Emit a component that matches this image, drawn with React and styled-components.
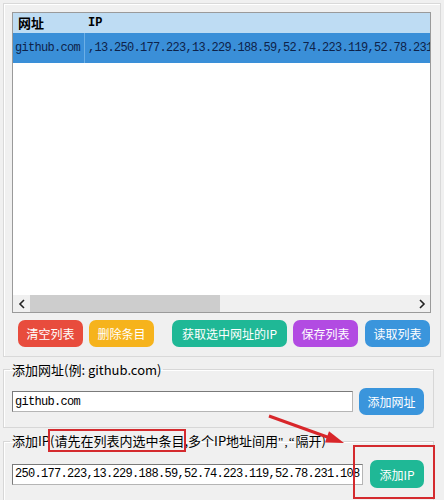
import React from 'react';
import styled, { createGlobalStyle } from 'styled-components';

const GlobalStyle = createGlobalStyle`
  body {
    margin: 0;
    background: #f0f0f0;
    font-family: "Noto Sans CJK SC", "Liberation Sans", sans-serif;
    font-size: 13px;
    color: #000;
  }
`;

const rows = [
  {
    site: 'github.com',
    ip: ',13.250.177.223,13.229.188.59,52.74.223.119,52.78.231.108',
  },
];

const buttons = [
  { text: '清空列表', color: '#e84c3d', width: 65 },
  { text: '删除条目', color: '#f6b31c', width: 65 },
  { text: '获取选中网址的IP', color: '#1fb896', width: 115, gap: 18 },
  { text: '保存列表', color: '#b24be2', width: 65 },
  { text: '读取列表', color: '#3a95dc', width: 65, gap: 7 },
];

const Chevron = ({ left }) => (
  <svg width="8" height="10" viewBox="0 0 8 10">
    <path
      d={left ? 'M6 1 L2 5 L6 9' : 'M2 1 L6 5 L2 9'}
      fill="none"
      stroke="#222"
      strokeWidth="1.6"
    />
  </svg>
);

const App = () => {
  return (
    <Window>
      <GlobalStyle />
      <ListPanel>
        <Table>
          <HeaderRow>
            <HeadCell>网址</HeadCell>
            <HeadCell mono>IP</HeadCell>
          </HeaderRow>
          {rows.map((r, i) => (
            <DataRow key={i}>
              <Cell>{r.site}</Cell>
              <Cell divider>{r.ip}</Cell>
            </DataRow>
          ))}
          <Filler />
          <ScrollBar>
            <ScrollArrow>
              <Chevron left />
            </ScrollArrow>
            <Thumb />
            <Track />
            <ScrollArrow>
              <Chevron />
            </ScrollArrow>
          </ScrollBar>
        </Table>
        <ButtonRow>
          {buttons.map((b) => (
            <ColorButton
              key={b.text}
              $color={b.color}
              $width={b.width}
              $gap={b.gap || 6}
            >
              {b.text}
            </ColorButton>
          ))}
        </ButtonRow>
      </ListPanel>

      <Group $width={431}>
        <Legend>添加网址(例: github.com)</Legend>
        <FormRow>
          <TextBox $width={341} defaultValue="github.com" />
          <ColorButton $color="#3a95dc" $width={65} $gap={6}>
            添加网址
          </ColorButton>
        </FormRow>
      </Group>

      <Group $width={431}>
        <Legend>
          添加IP<Marked>(请先在列表内选中条目</Marked>,多个IP地址间用<Quote>",“</Quote>隔开)
        </Legend>
        <FormRow>
          <TextBox
            $width={351}
            defaultValue="250.177.223,13.229.188.59,52.74.223.119,52.78.231.108"
          />
          <ColorButton $color="#1fb896" $width={54} $gap={7} $tall>
            添加IP
          </ColorButton>
        </FormRow>
      </Group>

      <Arrow width="100" height="50" viewBox="0 0 100 50">
        <line x1="9" y1="11" x2="70" y2="33" stroke="#d8262a" strokeWidth="3" />
        <polygon points="84,38 65,37.5 69,26.3" fill="#d8262a" />
      </Arrow>
      <Highlight />
    </Window>
  );
};

const Window = styled.div`
  position: relative;
  width: 444px;
  height: 500px;
  padding: 3px;
  box-sizing: border-box;
  overflow: hidden;
`;

const ListPanel = styled.div`
  height: 354px;
  box-sizing: border-box;
  padding: 8px 9px 9px 8px;
  border: 1px solid #d9d9d9;
  box-shadow: inset 1px 1px 0 #fff;
  display: flex;
  flex-direction: column;
  gap: 7px;
`;

const Table = styled.div`
  height: 301px;
  box-sizing: border-box;
  border: 1px solid #9a9a9a;
  background: #fff;
  display: flex;
  flex-direction: column;
  overflow: hidden;
`;

const HeaderRow = styled.div`
  display: grid;
  grid-template-columns: 71px 1fr;
  height: 20px;
  background: #bedcf3;
  align-items: center;
`;

const HeadCell = styled.div`
  padding-left: ${(p) => (p.mono ? '4px' : '5px')};
  font-weight: bold;
  line-height: 20px;
  font-size: ${(p) => (p.mono ? '12px' : '13px')};
  font-family: ${(p) =>
    p.mono
      ? '"Liberation Mono", "Noto Sans CJK SC", monospace'
      : '"Noto Sans CJK SC", sans-serif'};
`;

const DataRow = styled.div`
  display: grid;
  grid-template-columns: 71px 1fr;
  height: 30px;
  background: #3a8fd8;
  color: #0e2249;
`;

const Cell = styled.div`
  display: flex;
  align-items: center;
  padding-left: ${(p) => (p.divider ? '3px' : '2px')};
  border-left: ${(p) => (p.divider ? '1px solid #6cafe6' : 'none')};
  font-family: "Liberation Mono", monospace;
  font-size: 12px;
  letter-spacing: -0.7px;
  white-space: nowrap;
  overflow: hidden;
`;

const Filler = styled.div`
  flex: 1;
`;

const ScrollBar = styled.div`
  height: 17px;
  display: flex;
  background: #f0f0f0;
`;

const ScrollArrow = styled.div`
  width: 17px;
  display: flex;
  align-items: center;
  justify-content: center;
`;

const Thumb = styled.div`
  width: 190px;
  background: #cdcdcd;
`;

const Track = styled.div`
  flex: 1;
`;

const ButtonRow = styled.div`
  display: flex;
  padding-left: 6px;
`;

const ColorButton = styled.button`
  width: ${(p) => p.$width}px;
  height: ${(p) => (p.$tall ? '28px' : '27px')};
  margin-left: ${(p) => p.$gap}px;
  &:first-child {
    margin-left: 0;
  }
  flex: none;
  border: none;
  border-radius: 7px;
  background: ${(p) => p.$color};
  color: #fff;
  font-family: "Noto Sans CJK SC", sans-serif;
  font-size: 12px;
  padding: 0;
  white-space: nowrap;
  cursor: pointer;
`;

const Group = styled.fieldset`
  width: ${(p) => p.$width}px;
  box-sizing: border-box;
  margin: 4px 0 0 0;
  min-width: 0;
  padding: 0 8px 12px 8px;
  border: 1px solid #d7d7d7;
  box-shadow: inset 1px 1px 0 #fff;
`;

const Legend = styled.legend`
  padding: 0 2px;
  margin-left: -2px;
  line-height: 17px;
  font-size: 13px;
  white-space: nowrap;
`;

const Marked = styled.span`
  outline: 2px solid #d42a2e;
  outline-offset: 0px;
`;

const Quote = styled.span`
  font-family: "Liberation Serif", serif;
  letter-spacing: 1px;
`;

const FormRow = styled.div`
  display: flex;
  align-items: center;
  padding-top: 10px;
`;

const TextBox = styled.input`
  width: ${(p) => p.$width}px;
  height: 21px;
  box-sizing: border-box;
  border: 1px solid #7a7a7a;
  border-right-color: #b5b5b5;
  border-bottom-color: #b5b5b5;
  background: #fff;
  padding: 0 2px;
  font-family: "Liberation Mono", monospace;
  font-size: 12px;
  letter-spacing: -0.7px;
  color: #000;
  outline: none;
`;

const Arrow = styled.svg`
  position: absolute;
  left: 260px;
  top: 405px;
`;

const Highlight = styled.div`
  position: absolute;
  left: 353px;
  top: 445px;
  width: 82px;
  height: 54px;
  box-sizing: border-box;
  border: 2px solid #d42a2e;
`;

export default App;
